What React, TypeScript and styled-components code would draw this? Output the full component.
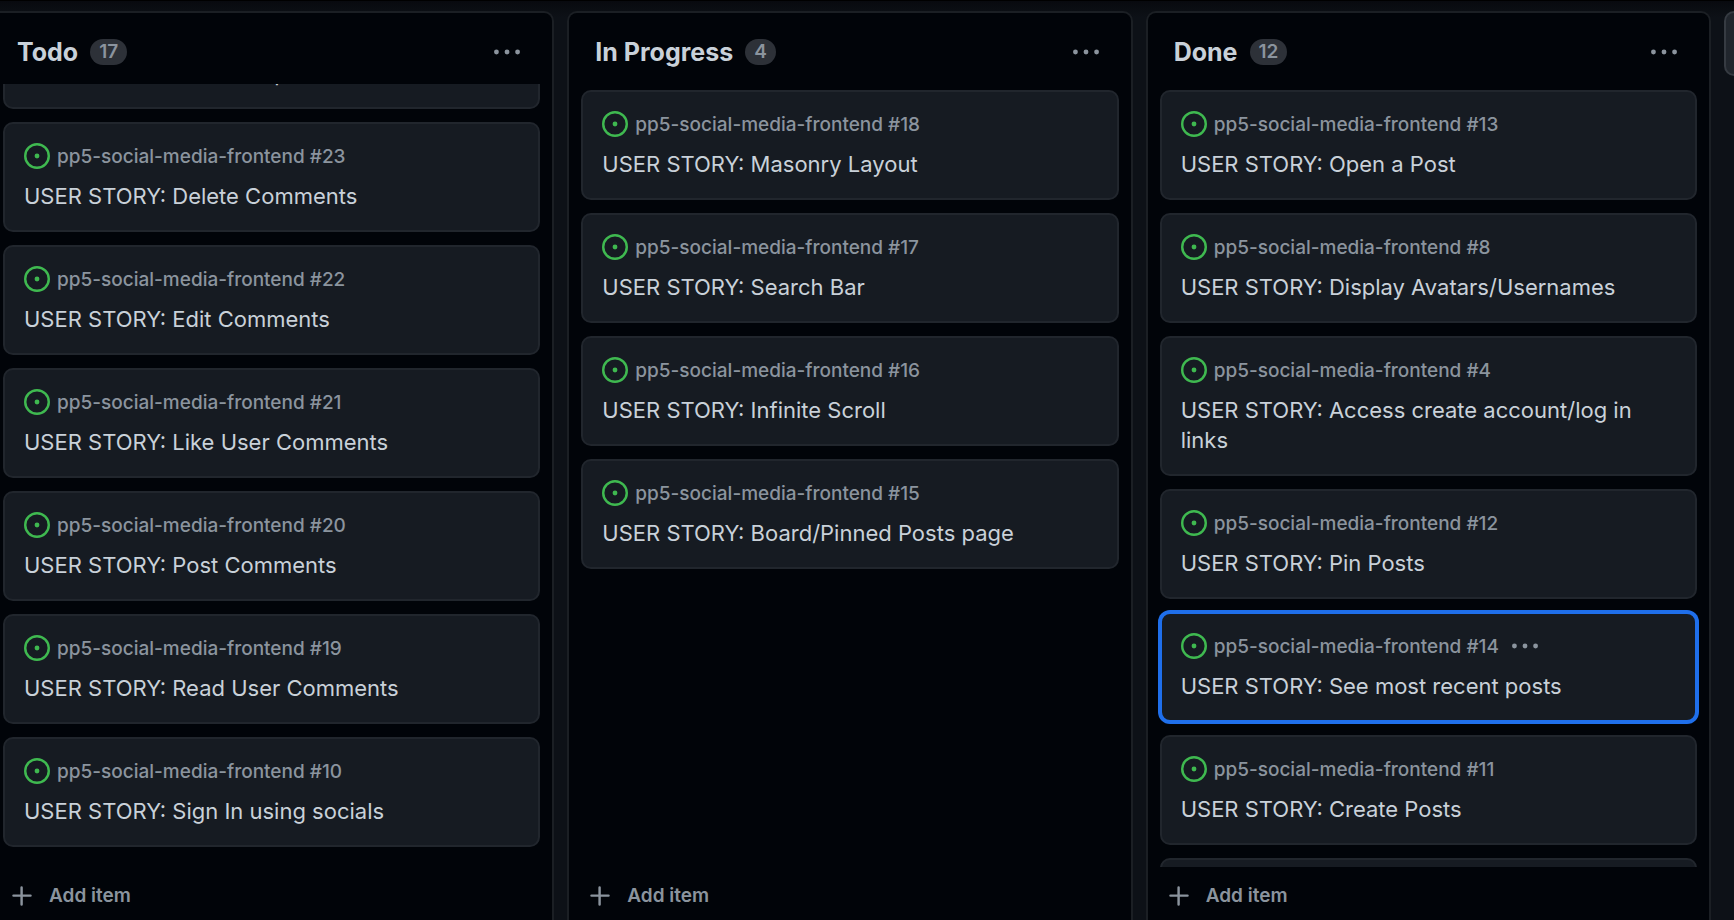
import React from "react";
import styled, { createGlobalStyle, css } from "styled-components";

const GlobalStyle = createGlobalStyle`
  *, *::before, *::after { box-sizing: border-box; }
  html, body, #root { height: 100%; }
  body {
    margin: 0;
    background: #0d1117;
    color: #c9d1d9;
    font-family: Inter, "Liberation Sans", sans-serif;
    overflow: hidden;
  }
`;

const Board = styled.main`
  display: grid;
  grid-template-columns: repeat(3, minmax(0, 1fr)) 10px;
  column-gap: 13px;
  height: 100%;
  margin-left: -11px;
  padding-top: 10px;
  border-top: 1px solid #000000;
  background: linear-gradient(#080a0f, #0d1117 16px);
`;

const Column = styled.section`
  display: flex;
  flex-direction: column;
  min-height: 0;
  background: #010409;
  border: 2px solid #1b1f24;
  border-bottom: 0;
  border-radius: 10px 10px 0 0;
`;

const ColumnHeader = styled.header`
  display: flex;
  align-items: center;
  flex: none;
  height: 71px;
  padding: 6px 32px 0 26px;
`;

const ColumnTitle = styled.h2`
  margin: 0;
  font-size: 25px;
  line-height: 30px;
  font-weight: 650;
`;

const Counter = styled.span`
  margin-left: 12px;
  padding: 0 9px;
  border-radius: 13px;
  background: #2d3138;
  color: #8b949e;
  font-size: 19px;
  line-height: 26px;
  font-weight: 600;
`;

const IconButton = styled.button<{ $end?: boolean }>`
  display: flex;
  padding: 0;
  border: 0;
  background: none;
  color: #8b949e;
  cursor: pointer;
  margin-left: ${(p) => (p.$end ? "auto" : "6px")};
`;

const CardList = styled.ul<{ $scrolled?: boolean }>`
  display: flex;
  flex-direction: column;
  flex: 1;
  gap: 13px;
  min-height: 0;
  margin: 0;
  padding: 6px 12px 0;
  list-style: none;
  overflow: hidden;
  ${(p) =>
    p.$scrolled &&
    css`
      justify-content: flex-end;
      padding-bottom: 20px;
    `}
`;

const Card = styled.li<{ $selected?: boolean }>`
  flex: none;
  padding: 19px;
  background: #161b22;
  border: 2px solid #21262d;
  border-radius: 10px;
  ${(p) =>
    p.$selected &&
    css`
      border-color: #1f6feb;
      box-shadow: 0 0 0 2px #1f6feb;
    `}
`;

const CardMeta = styled.div`
  display: flex;
  align-items: flex-start;
  gap: 7px;
  height: 26px;
  margin-bottom: 12px;
  color: #8b949e;
  font-size: 19px;
  line-height: 28px;
  font-weight: 500;
`;

const CardTitle = styled.a`
  display: block;
  color: #c9d1d9;
  font-size: 22px;
  line-height: 30px;
  font-weight: 425;
  text-decoration: none;
`;

const AddItem = styled.button`
  display: flex;
  align-items: center;
  flex: none;
  gap: 14px;
  height: 53px;
  padding: 5px 18px 0;
  border: 0;
  background: none;
  color: #8b949e;
  font-family: inherit;
  font-size: 19px;
  line-height: 26px;
  font-weight: 600;
  text-align: left;
  cursor: pointer;
`;

const AddColumn = styled.button`
  height: 65px;
  padding: 0;
  background: #21262d;
  border: 2px solid #363b42;
  border-right: 0;
  border-radius: 10px 0 0 10px;
  cursor: pointer;
`;

const IssueIcon = () => (
  <svg width="26" height="26" viewBox="0 0 16 16" fill="#3fb950" aria-hidden="true">
    <path d="M8 9.5a1.5 1.5 0 1 0 0-3 1.5 1.5 0 0 0 0 3Z" />
    <path d="M8 0a8 8 0 1 1 0 16A8 8 0 0 1 8 0ZM1.5 8a6.5 6.5 0 1 0 13 0 6.5 6.5 0 0 0-13 0Z" />
  </svg>
);

const KebabIcon = () => (
  <svg width="26" height="26" viewBox="0 0 16 16" fill="currentColor" aria-hidden="true">
    <circle cx="1.5" cy="8" r="1.5" />
    <circle cx="8" cy="8" r="1.5" />
    <circle cx="14.5" cy="8" r="1.5" />
  </svg>
);

const PlusIcon = () => (
  <svg width="26" height="26" viewBox="0 0 16 16" fill="currentColor" aria-hidden="true">
    <path d="M7.75 2a.75.75 0 0 1 .75.75V7h4.75a.75.75 0 0 1 0 1.5H8.5v4.75a.75.75 0 0 1-1.5 0V8.5H2.75a.75.75 0 0 1 0-1.5H7V2.75A.75.75 0 0 1 7.75 2Z" />
  </svg>
);

type Item = { id: number; title: string; selected?: boolean };
type ColumnData = { name: string; count: number; scrolled?: boolean; items: Item[] };

const columns: ColumnData[] = [
  {
    name: "Todo",
    count: 17,
    scrolled: true,
    items: [
      { id: 24, title: "Delete all posts" },
      { id: 23, title: "Delete Comments" },
      { id: 22, title: "Edit Comments" },
      { id: 21, title: "Like User Comments" },
      { id: 20, title: "Post Comments" },
      { id: 19, title: "Read User Comments" },
      { id: 10, title: "Sign In using socials" },
    ],
  },
  {
    name: "In Progress",
    count: 4,
    items: [
      { id: 18, title: "Masonry Layout" },
      { id: 17, title: "Search Bar" },
      { id: 16, title: "Infinite Scroll" },
      { id: 15, title: "Board/Pinned Posts page" },
    ],
  },
  {
    name: "Done",
    count: 12,
    items: [
      { id: 13, title: "Open a Post" },
      { id: 8, title: "Display Avatars/Usernames" },
      { id: 4, title: "Access create account/log in links" },
      { id: 12, title: "Pin Posts" },
      { id: 14, title: "See most recent posts", selected: true },
      { id: 11, title: "Create Posts" },
      { id: 9, title: "Sign Up" },
    ],
  },
];

export default function App() {
  return (
    <>
      <GlobalStyle />
      <Board>
        {columns.map((column) => (
          <Column key={column.name} aria-label={column.name}>
            <ColumnHeader>
              <ColumnTitle>{column.name}</ColumnTitle>
              <Counter>{column.count}</Counter>
              <IconButton $end type="button" aria-label={`Actions for ${column.name}`}>
                <KebabIcon />
              </IconButton>
            </ColumnHeader>
            <CardList $scrolled={column.scrolled}>
              {column.items.map((item) => (
                <Card key={item.id} $selected={item.selected}>
                  <CardMeta>
                    <IssueIcon />
                    <span>pp5-social-media-frontend #{item.id}</span>
                    {item.selected && (
                      <IconButton type="button" aria-label="Item actions">
                        <KebabIcon />
                      </IconButton>
                    )}
                  </CardMeta>
                  <CardTitle href={`#${item.id}`}>USER STORY: {item.title}</CardTitle>
                </Card>
              ))}
            </CardList>
            <AddItem type="button">
              <PlusIcon />
              Add item
            </AddItem>
          </Column>
        ))}
        <AddColumn type="button" aria-label="Add column" />
      </Board>
    </>
  );
}
